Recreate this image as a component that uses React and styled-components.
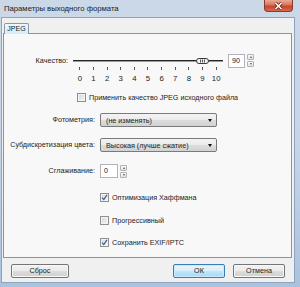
import React from 'react';
import styled, { createGlobalStyle } from 'styled-components';

const Global = createGlobalStyle`
  html, body { margin: 0; padding: 0; }
  body {
    width: 300px; height: 287px; overflow: hidden;
    background: #bccfe5;
    font-family: "Liberation Sans", Arial, sans-serif;
    color: #1c1c1c;
  }
  #root { width: 300px; height: 287px; }
`;

const FS = '7.2px';

const Window = styled.div`
  width: 300px; height: 287px; box-sizing: border-box;
  display: flex; flex-direction: column;
  background: linear-gradient(#cbd8e7, #c6d6e8 50%, #a9c2de);
  padding: 0 5px 4px 1px;
`;

const TitleBar = styled.div`
  height: 17px; display: flex; justify-content: space-between; align-items: flex-start;
`;

const Title = styled.div`
  padding: 4px 0 0 3px; font-size: 7.7px; line-height: 10px; color: #1a1a1a;
`;

const CloseButton = styled.div`
  width: 29px; height: 12px; box-sizing: border-box; margin-right: 2px;
  border: 1px solid #8a3a2c; border-top: none; border-radius: 0 0 4px 4px;
  background: linear-gradient(#eba897, #d9765f 45%, #c5452c 55%, #d8684c);
  display: flex; align-items: center; justify-content: center;
`;

const Client = styled.div`
  flex: 1; display: flex; flex-direction: column;
  background: #f0f0f0; border: 1px solid #8ea3bd;
  padding: 5px 2px 4px 1px;
`;

const TabStrip = styled.div`
  display: flex; height: 10px; padding-left: 1px;
`;

const Tab = styled.div`
  width: 25px; height: 11px; box-sizing: border-box;
  border: 1px solid #8c97a6; border-bottom: none; border-radius: 2px 2px 0 0;
  background: linear-gradient(#eef7fd, #d3ecfa);
  position: relative; z-index: 1;
  font-size: 7px; line-height: 10px; text-align: center; color: #1a1a1a;
`;

const Pane = styled.div`
  height: 225px; box-sizing: border-box;
  border: 1px solid #8e939b; background: #f8f8f8;
  display: flex; flex-direction: column;
`;

const Row = styled.div`
  display: flex; align-items: ${p => (p.$top ? 'flex-start' : 'center')};
  height: ${p => (p.$auto ? 'auto' : '14px')};
  margin-top: ${p => p.$mt}px;
  padding-left: ${p => p.$indent || 0}px;
  font-size: ${FS};
`;

const Label = styled.div`
  width: ${p => p.$w}px; text-align: right; margin-right: 5px;
  line-height: 14px; font-size: ${FS}; white-space: nowrap;
`;

const SliderBox = styled.div`
  width: 150px; display: flex; flex-direction: column; margin-right: 5px;
`;

const TrackArea = styled.div`
  height: 14px; position: relative; display: flex; align-items: center;
`;

const Track = styled.div`
  width: 100%; height: 1px; background: #262626; border-bottom: 1px solid #9a9a9a;
`;

const Thumb = styled.svg`
  position: absolute; top: 4px;
`;

const Scale = styled.div`
  display: grid; grid-template-columns: repeat(11, 1fr);
  margin-top: ${p => p.$mt}px;
`;

const Tick = styled.div`
  justify-self: center; width: 1px; height: 3px; background: #555;
`;

const Num = styled.div`
  justify-self: center; font-size: 7.8px; line-height: 10px; color: #222;
`;

const SpinBox = styled.div`
  width: ${p => p.$w}px; height: 14px; box-sizing: border-box;
  border: 1px solid #b0b4ba; background: #fff;
  font-size: ${FS}; line-height: 12px; padding-left: 3px;
`;

const SpinArrows = styled.div`
  display: flex; flex-direction: column; gap: 1px; margin-left: 2px;
`;

const SpinBtn = styled.div`
  width: 7px; height: 6px; box-sizing: border-box;
  border: 1px solid #b2b2b2; border-radius: 1px;
  background: linear-gradient(#fafafa, #e4e4e4);
  display: flex; align-items: center; justify-content: center;
  &::after {
    content: ''; width: 0; height: 0;
    border-left: 1.5px solid transparent; border-right: 1.5px solid transparent;
    ${p => (p.$down ? 'border-top: 2px solid #555;' : 'border-bottom: 2px solid #555;')}
  }
`;

const Spinner = ({ value, w }) => (
  <>
    <SpinBox $w={w}>{value}</SpinBox>
    <SpinArrows>
      <SpinBtn />
      <SpinBtn $down />
    </SpinArrows>
  </>
);

const Box = styled.div`
  width: 9px; height: 9px; box-sizing: border-box;
  border: 1px solid #8f8f8f;
  background: linear-gradient(135deg, #d6d6d6, #f6f6f6);
  box-shadow: inset 0 0 0 1px #f4f4f4;
  display: flex; align-items: center; justify-content: center;
  margin-right: 3px; flex-shrink: 0;
`;

const CheckText = styled.span`
  font-size: ${FS}; white-space: nowrap;
`;

const Check = ({ checked, children }) => (
  <>
    <Box>
      {checked && (
        <svg width="7" height="7" viewBox="0 0 7 7">
          <path d="M1 3.6 L2.8 5.6 L6 0.8" fill="none" stroke="#3a5a9a" strokeWidth="1.2" />
        </svg>
      )}
    </Box>
    <CheckText>{children}</CheckText>
  </>
);

const Combo = styled.div`
  width: 117px; height: 14px; box-sizing: border-box;
  border: 1px solid #7a7a7a; border-radius: 2px;
  background: linear-gradient(#f3f3f3, #ebebeb 50%, #dddddd 51%, #d2d2d2);
  display: flex; align-items: center; justify-content: space-between;
  padding: 0 4px 0 5px; font-size: ${FS};
  &::after {
    content: ''; width: 0; height: 0;
    border-left: 2.5px solid transparent; border-right: 2.5px solid transparent;
    border-top: 3px solid #111;
  }
`;

const ButtonRow = styled.div`
  display: flex; margin-top: 6px; height: 14px;
  padding: 0 7px 0 8px; gap: 8px;
`;

const Spacer = styled.div`flex: 1;`;

const Button = styled.div`
  width: ${p => p.$w}px; height: 14px; box-sizing: border-box;
  border: 1px solid ${p => (p.$default ? '#3d7cae' : '#757575')}; border-radius: 2px;
  background: ${p => (p.$default
    ? 'linear-gradient(#e8f5fc, #d8eefb 50%, #bee6fd 51%, #a7d9f5)'
    : 'linear-gradient(#f2f2f2, #ebebeb 50%, #dddddd 51%, #cfcfcf)')};
  box-shadow: inset 0 0 0 1px ${p => (p.$default ? '#c8ecfd' : '#f8f8f8')};
  font-size: ${FS}; line-height: 12px; text-align: center; color: #1c1c1c;
`;

export default function App() {
  const quality = 9;
  const thumbLeft = (150 / 11) * (quality + 0.5) - 6.5;
  return (
    <>
      <Global />
      <Window>
        <TitleBar>
          <Title>Параметры выходного формата</Title>
          <CloseButton>
            <svg width="9" height="8" viewBox="0 0 9 8">
              <path d="M1.5 1 L7.5 7 M7.5 1 L1.5 7" stroke="#5a1e14" strokeWidth="3" />
              <path d="M1.5 1 L7.5 7 M7.5 1 L1.5 7" stroke="#fff" strokeWidth="1.6" />
            </svg>
          </CloseButton>
        </TitleBar>
        <Client>
          <TabStrip>
            <Tab>JPEG</Tab>
          </TabStrip>
          <Pane>
            <Row $mt={20} $top $auto>
              <Label $w={64}>Качество:</Label>
              <SliderBox>
                <TrackArea>
                  <Track />
                  <Thumb width="13" height="6" viewBox="0 0 13 6" style={{ left: thumbLeft }}>
                    <rect x="0.5" y="0.5" width="12" height="5" rx="2.5" fill="#f4f4f4" stroke="#3a3a3a" />
                    <path d="M4.5 1.5 V4.5 M6.5 1.5 V4.5 M8.5 1.5 V4.5" stroke="#555" strokeWidth="1" />
                  </Thumb>
                </TrackArea>
                <Scale $mt={-1}>
                  {Array.from({ length: 11 }, (_, i) => <Tick key={i} />)}
                </Scale>
                <Scale $mt={4}>
                  {Array.from({ length: 11 }, (_, i) => <Num key={i}>{i}</Num>)}
                </Scale>
              </SliderBox>
              <Spinner value="90" w={17} />
            </Row>
            <Row $mt={6} $indent={73}>
              <Check>Применить качество JPEG исходного файла</Check>
            </Row>
            <Row $mt={9}>
              <Label $w={91}>Фотометрия:</Label>
              <Combo>(не изменять)</Combo>
            </Row>
            <Row $mt={11}>
              <Label $w={91}>Субдискретизация цвета:</Label>
              <Combo>Высокая (лучше сжатие)</Combo>
            </Row>
            <Row $mt={12}>
              <Label $w={91}>Сглаживание:</Label>
              <Spinner value="0" w={18} />
            </Row>
            <Row $mt={12} $indent={96}>
              <Check checked>Оптимизация Хаффмана</Check>
            </Row>
            <Row $mt={9} $indent={96}>
              <Check>Прогрессивный</Check>
            </Row>
            <Row $mt={8} $indent={96}>
              <Check checked>Сохранить EXIF/IPTC</Check>
            </Row>
          </Pane>
          <ButtonRow>
            <Button $w={58}>Сброс</Button>
            <Spacer />
            <Button $w={52} $default>ОК</Button>
            <Button $w={52}>Отмена</Button>
          </ButtonRow>
        </Client>
      </Window>
    </>
  );
}
